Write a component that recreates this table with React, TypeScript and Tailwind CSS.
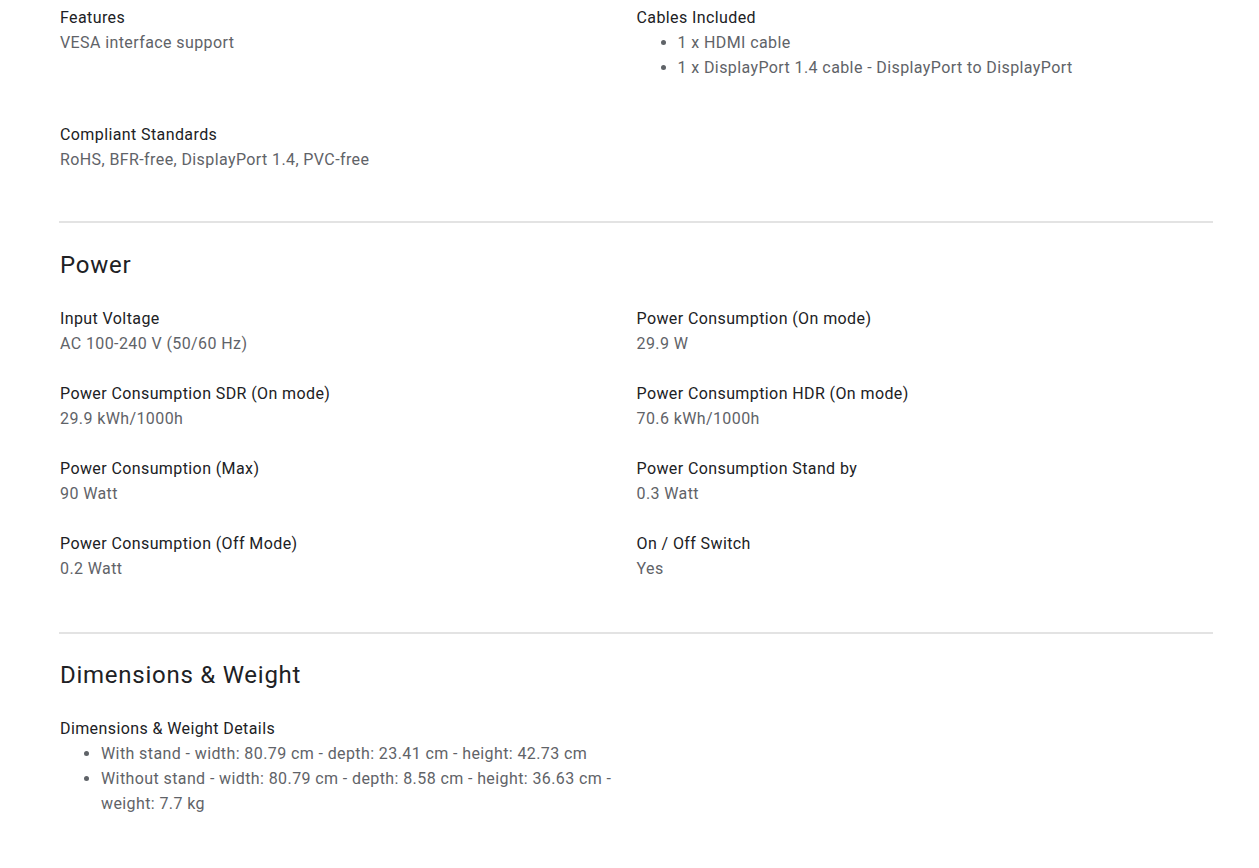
import React from "react";

type Item = { label: string; value?: string; list?: string[] };

function Spec({ item }: { item: Item }) {
  return (
    <div className="mb-[25px] pr-6">
      <div className="text-[16px] leading-[25px] text-[#202124]">{item.label}</div>
      {item.value && (
        <div className="text-[16px] leading-[25px] text-[#5f6368]">{item.value}</div>
      )}
      {item.list && (
        <ul className="list-disc pl-[41px] mb-[17px] text-[16px] leading-[25px] text-[#5f6368] marker:text-[#5f6368]">
          {item.list.map((l) => (
            <li key={l}>{l}</li>
          ))}
        </ul>
      )}
    </div>
  );
}

function Grid({ items }: { items: Item[] }) {
  return (
    <div className="grid grid-cols-2">
      {items.map((it) => (
        <Spec key={it.label} item={it} />
      ))}
    </div>
  );
}

export default function App() {
  return (
    <div
      className="w-[1259px] min-h-[868px] bg-white pl-[59px] pr-[46px] pt-[5px] tracking-wide"
      style={{ fontFamily: "Roboto, 'Liberation Sans', sans-serif" }}
    >
      <section className="pb-[24px] pl-px">
        <Grid
          items={[
            { label: "Features", value: "VESA interface support" },
            {
              label: "Cables Included",
              list: ["1 x HDMI cable", "1 x DisplayPort 1.4 cable - DisplayPort to DisplayPort"],
            },
            { label: "Compliant Standards", value: "RoHS, BFR-free, DisplayPort 1.4, PVC-free" },
          ]}
        />
      </section>
      <div className="h-[2px] bg-[#e3e3e3]" />
      <section className="pt-[26px] pb-[26px] pl-px">
        <h2 className="text-[24px] leading-[32px] tracking-[0.031em] text-[#202124] mb-[25px]">Power</h2>
        <Grid
          items={[
            { label: "Input Voltage", value: "AC 100-240 V (50/60 Hz)" },
            { label: "Power Consumption (On mode)", value: "29.9 W" },
            { label: "Power Consumption SDR (On mode)", value: "29.9 kWh/1000h" },
            { label: "Power Consumption HDR (On mode)", value: "70.6 kWh/1000h" },
            { label: "Power Consumption (Max)", value: "90 Watt" },
            { label: "Power Consumption Stand by", value: "0.3 Watt" },
            { label: "Power Consumption (Off Mode)", value: "0.2 Watt" },
            { label: "On / Off Switch", value: "Yes" },
          ]}
        />
      </section>
      <div className="h-[2px] bg-[#e3e3e3]" />
      <section className="pt-[25px] pl-px">
        <h2 className="text-[24px] leading-[32px] tracking-[0.031em] text-[#202124] mb-[25px]">Dimensions &amp; Weight</h2>
        <Grid
          items={[
            {
              label: "Dimensions & Weight Details",
              list: [
                "With stand - width: 80.79 cm - depth: 23.41 cm - height: 42.73 cm",
                "Without stand - width: 80.79 cm - depth: 8.58 cm - height: 36.63 cm - weight: 7.7 kg",
              ],
            },
          ]}
        />
      </section>
    </div>
  );
}
